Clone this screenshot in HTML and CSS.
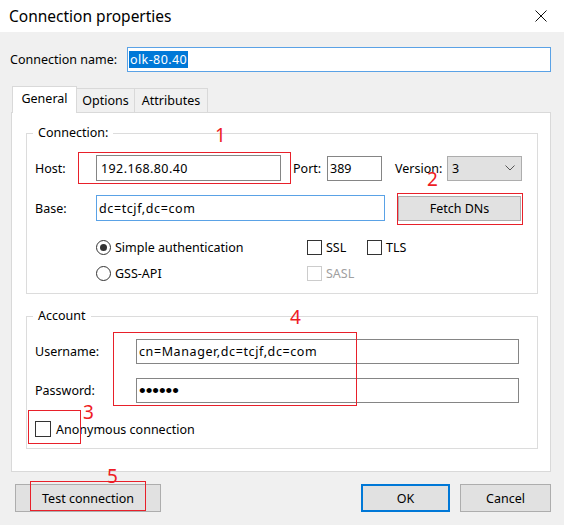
FILE: index.html
```html
<!DOCTYPE html>
<html>
<head>
<meta charset="utf-8">
<title>Connection properties</title>
<link rel="stylesheet" href="styles.css">
</head>
<body>
<div class="window">
  <div class="titlebar">
    <span class="title">Connection properties</span>
    <svg class="close" width="12" height="12" viewBox="0 0 12 12"><path d="M0.5 0.5 L11.5 11.5 M11.5 0.5 L0.5 11.5" stroke="#111" stroke-width="1" fill="none"/></svg>
  </div>

  <div class="namerow">
    <span class="name-lbl">Connection name:</span>
    <div class="field name-field"><span class="sel">olk-80.40</span></div>
  </div>

  <div class="tabs">
    <div class="tab active">General</div>
    <div class="tab">Options</div>
    <div class="tab">Attributes</div>
  </div>

  <div class="panel">
    <fieldset class="group conn">
      <legend>Connection:</legend>
      <div class="row r-host">
        <span class="lbl">Host:</span>
        <div class="field gray host">192.168.80.40</div>
        <span class="lbl port-lbl">Port:</span>
        <div class="field gray port">389</div>
        <span class="lbl ver-lbl">Version:</span>
        <div class="select"><span>3</span><svg width="10" height="6" viewBox="0 0 10 6"><path d="M0.5 0.5 L5 5 L9.5 0.5" stroke="#555" stroke-width="1" fill="none"/></svg></div>
      </div>
      <div class="row r-base">
        <span class="lbl">Base:</span>
        <div class="field blue base">dc=tcjf,dc=com</div>
        <div class="btn fetch">Fetch DNs</div>
      </div>
      <div class="row opts r-opt1">
        <div class="cell auth"><span class="radio on"></span><span class="ctext">Simple authentication</span></div>
        <div class="cell ssl"><span class="check"></span><span class="ctext">SSL</span></div>
        <div class="cell"><span class="check"></span><span class="ctext">TLS</span></div>
      </div>
      <div class="row opts r-opt2">
        <div class="cell auth"><span class="radio"></span><span class="ctext">GSS-API</span></div>
        <div class="cell ssl disabled"><span class="check"></span><span class="ctext">SASL</span></div>
      </div>
    </fieldset>

    <fieldset class="group account">
      <legend>Account</legend>
      <div class="row r-user">
        <span class="lbl wide">Username:</span>
        <div class="field gray acct user">cn=Manager,dc=tcjf,dc=com</div>
      </div>
      <div class="row r-pass">
        <span class="lbl wide">Password:</span>
        <div class="field gray acct"><span class="dots">••••••</span></div>
      </div>
      <div class="row r-anon">
        <span class="check anon"></span><span class="ctext">Anonymous connection</span>
      </div>
    </fieldset>
  </div>

  <div class="buttons">
    <div class="btn test">Test connection</div>
    <div class="right">
      <div class="btn ok">OK</div>
      <div class="btn cancel">Cancel</div>
    </div>
  </div>

  <div class="mark box b1"></div>
  <div class="mark box b2"></div>
  <div class="mark box b3"></div>
  <div class="mark box b4"></div>
  <div class="mark box b5"></div>
  <span class="mark num n1">1</span>
  <span class="mark num n2">2</span>
  <span class="mark num n3">3</span>
  <span class="mark num n4">4</span>
  <span class="mark num n5">5</span>
</div>
</body>
</html>
```

FILE: styles.css
```css
* { box-sizing: border-box; }

body {
  margin: 0;
  background: #f0f0f0;
  font-family: "Noto Sans", "Open Sans", sans-serif;
  font-size: 12.5px;
  color: #000;
}

.window {
  position: relative;
  width: 564px;
  height: 525px;
  background: #f0f0f0;
  overflow: hidden;
}

.titlebar {
  height: 32px;
  background: #fff;
  display: flex;
  align-items: center;
  justify-content: space-between;
  padding: 0 17px 0 9px;
}
.title { font-size: 15.5px; color: #000; }
.close { display: block; }

.namerow {
  display: flex;
  align-items: center;
  margin-top: 15px;
  padding-left: 10px;
}
.name-lbl { width: 117px; }
.field {
  height: 25px;
  display: flex;
  align-items: center;
  background: #fff;
  border: 1px solid #7a7a7a;
  padding-left: 2px;
  white-space: nowrap;
  overflow: hidden;
}
.field.gray { border-color: #858585; }
.field.blue { border-color: #5aa2e6; }
.name-field {
  width: 424px;
  border-color: #5aa2e6;
  padding-left: 1px;
}
.sel {
  background: #0078d7;
  color: #fff;
  line-height: 17px;
  padding: 0 1px;
  letter-spacing: 0.4px;
}

.tabs {
  display: flex;
  align-items: flex-end;
  height: 26px;
  margin-top: 14px;
  margin-left: 12px;
  position: relative;
  z-index: 2;
}
.tab {
  height: 24px;
  display: flex;
  align-items: center;
  justify-content: center;
  border: 1px solid #d9d9d9;
  border-bottom: none;
  background: #f0f0f0;
  margin-left: -1px;
}
.tab:nth-child(1) { width: 65px; margin-left: 0; }
.tab:nth-child(2) { width: 59px; }
.tab:nth-child(3) { width: 74px; }
.tab.active {
  height: 27px;
  margin-bottom: -1px;
  background: #fff;
  position: relative;
  z-index: 3;
  padding-bottom: 3px;
}

.panel {
  margin-left: 11px;
  width: 540px;
  height: 360px;
  background: #fff;
  border: 1px solid #d9d9d9;
  padding: 12px 12px 0 14px;
  position: relative;
  z-index: 1;
}

.group {
  margin: 0;
  border: 1px solid #dcdcdc;
  padding: 0 12px 10px 7px;
  min-width: 0;
}
.group legend {
  padding: 0 5px;
  margin-left: -1px;
  line-height: 16px;
}
.account { margin-top: 14px; padding-bottom: 9px; }

.row { display: flex; align-items: center; }
.lbl { width: 62px; flex: none; padding-left: 1px; }
.lbl.wide { width: 102px; }

.r-host { margin-top: 14px; height: 26px; }
.host { width: 185px; height: 26px; padding-left: 4px; letter-spacing: 0.4px; }
.port-lbl { width: 46px; padding-left: 12px; }
.port { width: 55px; height: 25px; }
.ver-lbl { width: 65px; padding-left: 13px; }
.select {
  width: 75px;
  height: 25px;
  background: #e1e1e1;
  border: 1px solid #adadad;
  display: flex;
  align-items: center;
  justify-content: space-between;
  padding: 0 6px 0 4px;
}

.r-base { margin-top: 14px; height: 26px; }
.base { width: 289px; height: 26px; letter-spacing: 0.6px; }

.btn {
  display: flex;
  align-items: center;
  justify-content: center;
  background: #e1e1e1;
  border: 1px solid #adadad;
  color: #000;
}
.fetch { width: 123px; height: 25px; margin-left: 13px; }

.opts { padding-left: 62px; height: 20px; }
.r-opt1 { margin-top: 16px; }
.r-opt2 { margin-top: 6px; }
.cell { display: flex; align-items: center; }
.cell.auth { width: 211px; }
.cell.ssl { width: 60px; }
.ctext { margin-left: 4px; }
.radio {
  width: 15px;
  height: 15px;
  border: 1px solid #333;
  border-radius: 50%;
  background: #fff;
  display: flex;
  align-items: center;
  justify-content: center;
  flex: none;
}
.radio.on::after {
  content: "";
  width: 7px;
  height: 7px;
  border-radius: 50%;
  background: #333;
}
.check {
  width: 15px;
  height: 15px;
  border: 1px solid #333;
  background: #fff;
  flex: none;
}
.disabled .check { border-color: #cccccc; }
.disabled .ctext { color: #a0a0a0; }

.r-user { margin-top: 15px; height: 25px; }
.r-pass { margin-top: 14px; height: 25px; }
.acct { width: 383px; }
.user { letter-spacing: 0.6px; }
.dots {
  font-family: "Liberation Sans", Arial, sans-serif;
  font-size: 19px;
  line-height: 1;
  letter-spacing: 0;
}
.r-anon { margin-top: 16px; height: 20px; }
.check.anon { margin-left: 1px; width: 16px; height: 16px; }
.r-anon .ctext { margin-left: 5px; }

.buttons {
  display: flex;
  justify-content: space-between;
  margin-top: 12px;
  padding: 0 13px 0 15px;
}
.buttons .btn { height: 28px; }
.test { width: 146px; }
.right { display: flex; gap: 10px; }
.ok { width: 89px; border: 2px solid #0078d7; }
.cancel { width: 91px; }

.mark { position: absolute; z-index: 10; }
.box { border: 1px solid #e8202a; }
.b1 { left: 78px; top: 152px; width: 213px; height: 32px; }
.b2 { left: 397px; top: 193px; width: 126px; height: 32px; }
.b3 { left: 28px; top: 410px; width: 53px; height: 34px; }
.b4 { left: 113px; top: 332px; width: 244px; height: 74px; }
.b5 { left: 30px; top: 481px; width: 116px; height: 30px; }
.num {
  color: #ee1c25;
  font-size: 19px;
  line-height: 19px;
  font-family: "Noto Sans", sans-serif;
}
.n1 { left: 215px; top: 126px; }
.n2 { left: 427px; top: 170px; }
.n3 { left: 83px; top: 403px; }
.n4 { left: 290px; top: 308px; }
.n5 { left: 107px; top: 467px; }
```
